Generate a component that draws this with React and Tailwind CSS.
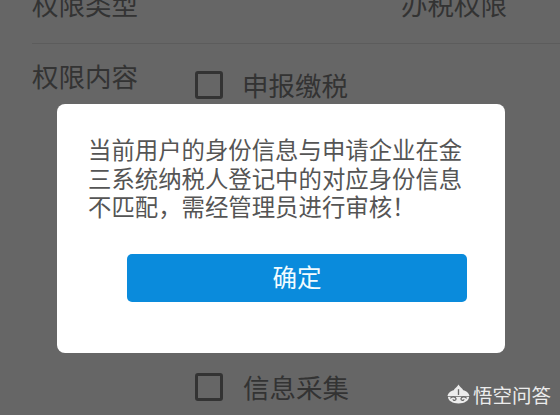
const cjk = "font-['Noto_Sans_CJK_SC','Liberation_Sans',sans-serif]";

function Box() {
  return <div className="w-[28px] h-[28px] shrink-0 rounded-[3px] border-[3px] border-[#333333]" />;
}

function Logo() {
  return (
    <svg viewBox="0 0 24 20" className="w-[23px] h-[20px] shrink-0 mt-[4px]" fill="none">
      <path d="M12 0 C13 2.5 16 3.5 17 6 C20 6.5 23 9 23.5 12 L0.5 12 C1 9 4 6.5 7 6 C8 3.5 11 2.5 12 0Z" fill="#ececec" />
      <path d="M1 12.8 H23 C23 17 18 19.8 12 19.8 C6 19.8 1 17 1 12.8Z" fill="#ececec" />
      <path d="M3.5 14.5 C5 12.5 9 12.5 9.5 15 C9.5 17 6.5 17.3 6.3 15.5 M20.5 14.5 C19 12.5 15 12.5 14.5 15 C14.5 17 17.5 17.3 17.7 15.5" stroke="#666666" strokeWidth="1.3" />
      <path d="M12 5 V11" stroke="#666666" strokeWidth="1.4" />
    </svg>
  );
}

export default function App() {
  return (
    <div className={`relative w-[560px] h-[415px] overflow-hidden bg-[#666666] ${cjk}`}>
      <div className="flex items-center justify-between pl-[32px] pr-[53px] -mt-[31px] h-[74px] pb-[5px] text-[26.5px] leading-[36px] text-[#333333]">
        <span>权限类型</span>
        <span>办税权限</span>
      </div>
      <div className="ml-[32px] h-px bg-[#5c5c5c]" />
      <div className="flex items-start pl-[32px] pt-[14px] text-[26.5px] leading-[36px] text-[#333333]">
        <span className="w-[163px]">权限内容</span>
        <div className="flex items-center gap-[21px] mt-[9px]">
          <Box />
          <span className="-ml-[2px]">申报缴税</span>
        </div>
      </div>
      <div className="flex items-center gap-[20px] pl-[195px] mt-[266px] text-[26.5px] leading-[36px] text-[#333333]">
        <Box />
        <span>信息采集</span>
      </div>

      <div className="absolute left-[57px] top-[104px] w-[448px] h-[249px] rounded-[8px] bg-white pt-[31px] pl-[31px] flex flex-col items-start">
        <p className="w-[384px] text-[23.4px] leading-[28.5px] text-[#555555]">
          当前用户的身份信息与申请企业在金三系统纳税人登记中的对应身份信息不匹配，需经管理员进行审核！
        </p>
        <button className="mt-[33px] ml-[39px] w-[340px] h-[48px] rounded-[5px] bg-[#0a8bdc] text-[24.5px] text-[#f2fbff]">
          确定
        </button>
      </div>

      <div className="absolute left-[447px] top-[380px] flex items-start gap-[3px]">
        <Logo />
        <span className="mt-[1px] text-[19.5px] leading-[28px] text-[#ececec]">悟空问答</span>
      </div>
    </div>
  );
}
